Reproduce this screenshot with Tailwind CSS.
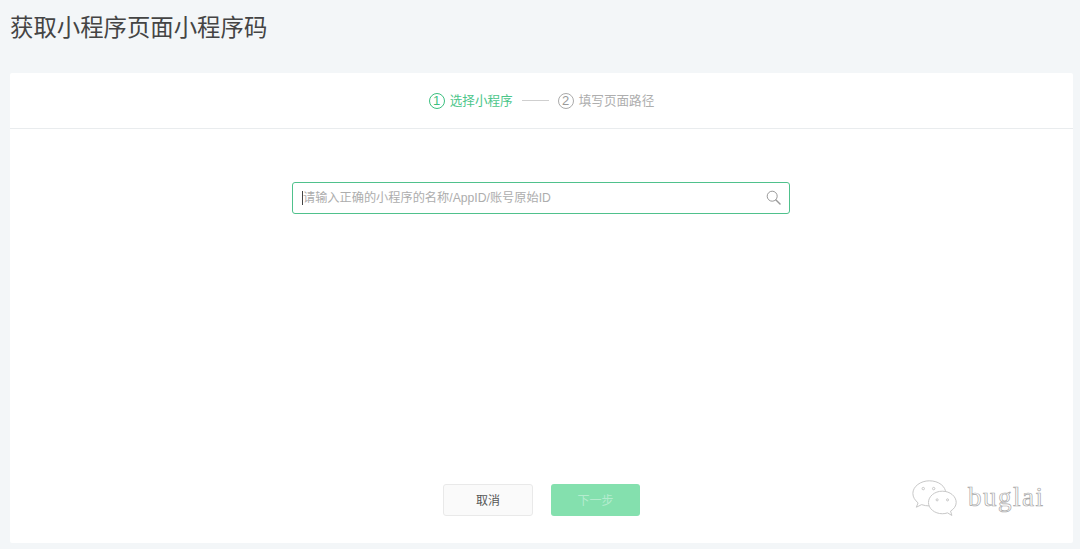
<!DOCTYPE html>
<html lang="zh-CN">
<head>
    <meta charset="UTF-8">
    <title>获取小程序页面小程序码</title>
    <script src="https://cdn.jsdelivr.net/npm/@tailwindcss/browser@4"></script>
</head>
<body class="w-[1080px] h-[549px] overflow-hidden bg-[#f3f6f8] font-['Noto_Sans_CJK_SC','Noto_Sans',sans-serif]">
    <div class="h-[73px] pl-[10px] pt-[9px]">
        <h1 class="text-[23.4px] leading-[34px] font-normal text-[#444]">获取小程序页面小程序码</h1>
    </div>

    <div class="relative ml-[10px] w-[1063px] h-[470px] bg-white rounded-[2px] flex flex-col">
        <!-- steps -->
        <div class="h-[56px] shrink-0 border-b border-[#e9ecee] flex items-center justify-center">
            <span class="w-[16px] h-[16px] rounded-full border border-[#3cc07f] text-[#3cc07f] text-[13px] leading-[14px] text-center font-['Liberation_Sans',sans-serif]">1</span>
            <span class="ml-[5px] text-[12.6px] text-[#4cc68a]">选择小程序</span>
            <span class="mx-[9px] w-[27px] h-px bg-[#cfcfcf]"></span>
            <span class="w-[16px] h-[16px] rounded-full border border-[#ababab] text-[#9a9a9a] text-[13px] leading-[14px] text-center font-['Liberation_Sans',sans-serif]">2</span>
            <span class="ml-[5px] text-[12.6px] text-[#aeaeae]">填写页面路径</span>
        </div>

        <!-- search -->
        <div class="pt-[53px] flex justify-center pr-[1px]">
            <div class="w-[498px] h-[32px] border border-[#4fc18c] rounded-[3px] flex items-center pl-[9px] pr-[8px]">
                <span class="w-px h-[14px] bg-[#444]"></span>
                <span class="text-[12.2px] text-[#adadad] flex-1 mt-[1px] font-['Liberation_Sans','Noto_Sans_CJK_SC',sans-serif]">请输入正确的小程序的名称/AppID/账号原始ID</span>
                <svg class="w-[15px] h-[15px] text-[#9a9a9a] mt-[-1px]" viewBox="0 0 15 15" fill="none" stroke="currentColor">
                    <circle cx="6.2" cy="6.2" r="5"/>
                    <path d="M10 10l4 4" stroke-width="1.5" stroke-linecap="round"/>
                </svg>
            </div>
        </div>

        <!-- buttons -->
        <div class="mt-auto pb-[27px] flex justify-center gap-[18px]">
            <button class="w-[90px] h-[32px] rounded-[3px] border border-[#e9e9e9] bg-[#fafafa] text-[12px] text-[#555]">取消</button>
            <button class="w-[89px] h-[32px] rounded-[3px] bg-[#84e0ae] text-[12px] text-[#b4ecce]">下一步</button>
        </div>

        <!-- watermark -->
        <div class="absolute left-[902px] top-[404px] flex items-center">
            <svg class="w-[52px] h-[44px]" viewBox="0 0 60 44" fill="#fff" stroke="#c4c4c4" stroke-width="1.100">
                <path d="M20 1C10 1 1 7.500 1 15.500c0 4.500 2.500 8 6 11l-2 5 6-3c3 1 6 1.500 9 1.500 11 0 19-6.500 19-14.500S31 1 20 1z"/>
                <path d="M35 13c-9 0-16 6-16 13s7 13 16 13c2 0 4-.3 6-1l5 3-1.500-5c4-2.500 6.500-6 6.500-10 0-7-7-13-16-13z"/>
                <circle cx="13" cy="10" r="1.400" fill="none"/>
                <circle cx="25" cy="10" r="1.400" fill="none"/>
                <circle cx="29" cy="23" r="1.200" fill="none"/>
                <circle cx="41" cy="23" r="1.200" fill="none"/>
            </svg>
            <span class="ml-[4px] mt-[-4px] text-[27px] leading-none text-white font-['Liberation_Serif',serif] tracking-[1.500px] [-webkit-text-stroke:0.700px_#a8a8a8]">buglai</span>
        </div>
    </div>
</body>
</html>
